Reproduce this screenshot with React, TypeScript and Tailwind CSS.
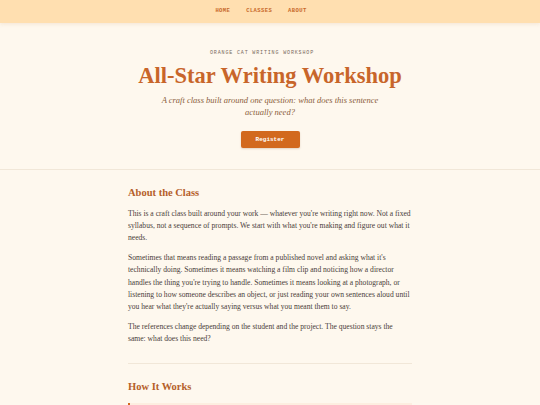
const NAV = ['Home', 'Classes', 'About'];

const ABOUT = [
  "This is a craft class built around your work \u2014 whatever you're writing right now. Not a fixed syllabus, not a sequence of prompts. We start with what you're making and figure out what it needs.",
  "Sometimes that means reading a passage from a published novel and asking what it's technically doing. Sometimes it means watching a film clip and noticing how a director handles the thing you're trying to handle. Sometimes it means looking at a photograph, or listening to how someone describes an object, or just reading your own sentences aloud until you hear what they're actually saying versus what you meant them to say.",
  'The references change depending on the student and the project. The question stays the same: what does this need?',
];

const serif = { fontFamily: '"Liberation Serif", "DejaVu Serif", serif' };
const mono = { fontFamily: '"Liberation Mono", "DejaVu Sans Mono", monospace' };

export default function App() {
  return (
    <div className="min-h-screen bg-[#fef8ee] text-[#4a4039]" style={serif}>
      {/* Nav */}
      <nav className="h-[23px] bg-[#ffdfb0] shadow-[0_1px_4px_rgba(180,120,60,0.15)] flex items-center justify-center gap-[16px] pr-[18px] relative z-10">
        {NAV.map(item => (
          <a key={item} className="text-[5.5px] font-bold uppercase tracking-[0.4px] text-[#c8682a]" style={mono}>
            {item}
          </a>
        ))}
      </nav>

      {/* Hero */}
      <header className="border-b border-[#f1e7d8] pt-[27px] pb-[21px] flex flex-col items-center text-center">
        <p className="pr-[16px] text-[5px] uppercase tracking-[0.85px] text-[#7a6a60]" style={mono}>
          Orange Cat Writing Workshop
        </p>
        <h1 className="mt-[4px] text-[22.5px] leading-[28px] font-bold text-[#c8652a]">All-Star Writing Workshop</h1>
        <p className="mt-[4px] w-[236px] text-[8.5px] leading-[12px] italic text-[#8b5e3c]">
          A craft class built around one question: what does this sentence actually need?
        </p>
        <button
          className="mt-[13px] w-[59px] h-[17px] rounded-[2px] bg-[#d2691e] text-white text-[6px] font-bold shadow-[0_1px_2px_rgba(120,60,20,0.2)]"
          style={mono}
        >
          Register
        </button>
      </header>

      {/* Content */}
      <main className="max-w-[284px] mx-auto pt-[16px]">
        <h2 className="text-[10.5px] leading-[14px] font-bold text-[#b5602a]">About the Class</h2>
        <div className="mt-[8px] flex flex-col gap-[7px] text-[7.6px] leading-[12.4px]">
          {ABOUT.map((p, i) => (
            <p key={i}>{p}</p>
          ))}
        </div>
        <hr className="mt-[17px] border-0 border-t border-[#f1e7d8]" />
        <h2 className="mt-[16px] text-[10.5px] leading-[14px] font-bold text-[#b5602a]">How It Works</h2>
        <div className="mt-[9px] h-[40px] bg-[#fdeee0] border-l-2 border-[#d2691e]" />
      </main>
    </div>
  );
}
